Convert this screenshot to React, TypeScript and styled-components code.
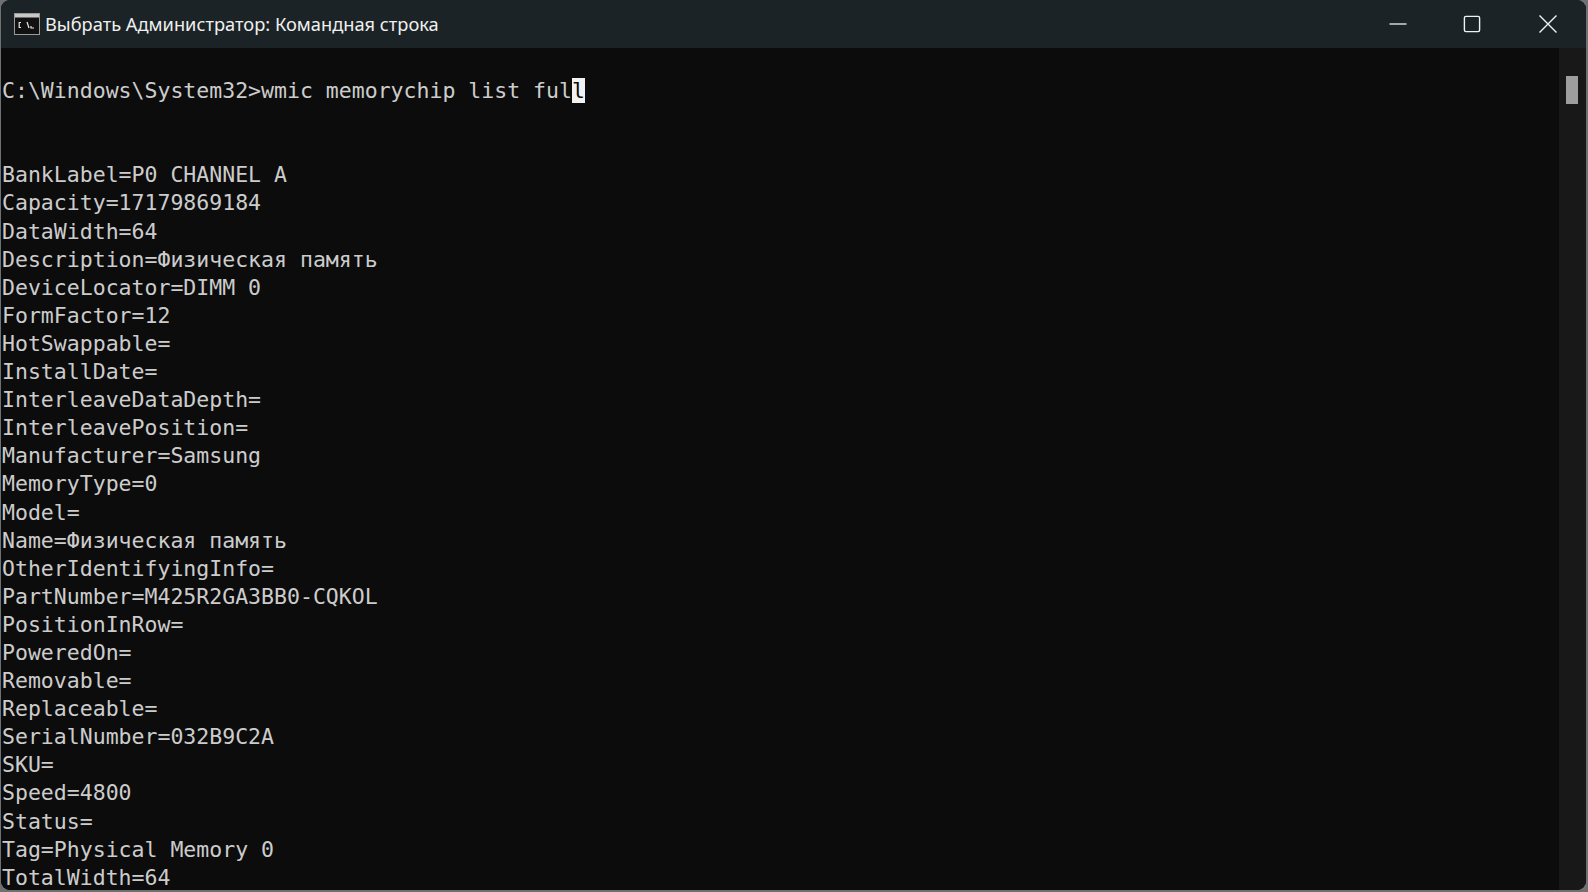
import React from "react";
import styled, { createGlobalStyle } from "styled-components";

const Global = createGlobalStyle`
  html, body { margin: 0; padding: 0; height: 100%; background: #6f7071; overflow: hidden; }
  #root { height: 100%; }
`;

const Window = styled.div`
  width: 1585px;
  height: 890px;
  box-sizing: border-box;
  border-radius: 9px;
  overflow: hidden;
  background: #0c0c0c;
  display: flex;
  flex-direction: column;
  margin-left: 1px;
`;

const TitleBar = styled.div`
  height: 48px;
  flex: none;
  background: #1c2326;
  display: flex;
  align-items: center;
`;

const AppIcon = styled.svg`
  width: 26px;
  height: 22px;
  margin-left: 13px;
  flex: none;
`;

const Title = styled.div`
  margin-left: 5px;
  flex: 1;
  font: 400 18.26px/1 "Noto Sans", "Open Sans", sans-serif;
  color: #eef0f0;
  white-space: nowrap;
`;

const Controls = styled.div`
  display: flex;
  align-items: center;
  margin-right: 28px;
`;

const CtlIcon = styled.svg<{ $gap?: number }>`
  width: 20px;
  height: 20px;
  display: block;
  stroke: #f0f2f2;
  fill: none;
  margin-right: ${(p) => p.$gap ?? 0}px;
`;

const Body = styled.div`
  flex: 1;
  min-height: 0;
  display: flex;
`;

const Console = styled.pre`
  flex: 1;
  margin: 0;
  padding: 1px 0 0 1px;
  overflow: hidden;
  font: 400 21.52px/28.09px "DejaVu Sans Mono", "Liberation Mono", monospace;
  color: #cccccc;
  background: #0c0c0c;
`;

const Cursor = styled.span`
  background: #f2f2f2;
  color: #0c0c0c;
`;

const ScrollTrack = styled.div`
  width: 27px;
  flex: none;
  background: #181818;
  padding: 28px 8px 0 7px;
  box-sizing: border-box;
`;

const Thumb = styled.div`
  height: 28px;
  background: #9e9e9e;
`;

const lines = [
  "BankLabel=P0 CHANNEL A",
  "Capacity=17179869184",
  "DataWidth=64",
  "Description=Физическая память",
  "DeviceLocator=DIMM 0",
  "FormFactor=12",
  "HotSwappable=",
  "InstallDate=",
  "InterleaveDataDepth=",
  "InterleavePosition=",
  "Manufacturer=Samsung",
  "MemoryType=0",
  "Model=",
  "Name=Физическая память",
  "OtherIdentifyingInfo=",
  "PartNumber=M425R2GA3BB0-CQKOL",
  "PositionInRow=",
  "PoweredOn=",
  "Removable=",
  "Replaceable=",
  "SerialNumber=032B9C2A",
  "SKU=",
  "Speed=4800",
  "Status=",
  "Tag=Physical Memory 0",
  "TotalWidth=64",
];

export default function App() {
  return (
    <>
      <Global />
      <Window>
        <TitleBar>
          <AppIcon viewBox="0 0 26 22">
            <rect x="0.5" y="0.5" width="25" height="21" fill="#111" stroke="#9a9a9a" />
            <rect x="1" y="1" width="24" height="3.5" fill="#c8c8c8" />
            <path d="M7 9.5H5.2v5H7M10 10.5v.1M10 13.5v.1M13 9l2 6M17 13v2h3" stroke="#e8e8e8" strokeWidth="1.2" fill="none" />
          </AppIcon>
          <Title>Выбрать Администратор: Командная строка</Title>
          <Controls>
            <CtlIcon $gap={54} viewBox="0 0 20 20"><path d="M1.5 10h17" strokeWidth="1.3" /></CtlIcon>
            <CtlIcon $gap={56} viewBox="0 0 20 20"><rect x="2.4" y="2.4" width="15.2" height="15.2" rx="1.5" strokeWidth="1.4" /></CtlIcon>
            <CtlIcon viewBox="0 0 20 20"><path d="M1.5 1.5l17 17M18.5 1.5l-17 17" strokeWidth="1.4" /></CtlIcon>
          </Controls>
        </TitleBar>
        <Body>
          <Console>
            {"\n"}C:\Windows\System32&gt;wmic memorychip list ful<Cursor>l</Cursor>
            {"\n\n\n"}
            {lines.join("\n")}
          </Console>
          <ScrollTrack><Thumb /></ScrollTrack>
        </Body>
      </Window>
    </>
  );
}
